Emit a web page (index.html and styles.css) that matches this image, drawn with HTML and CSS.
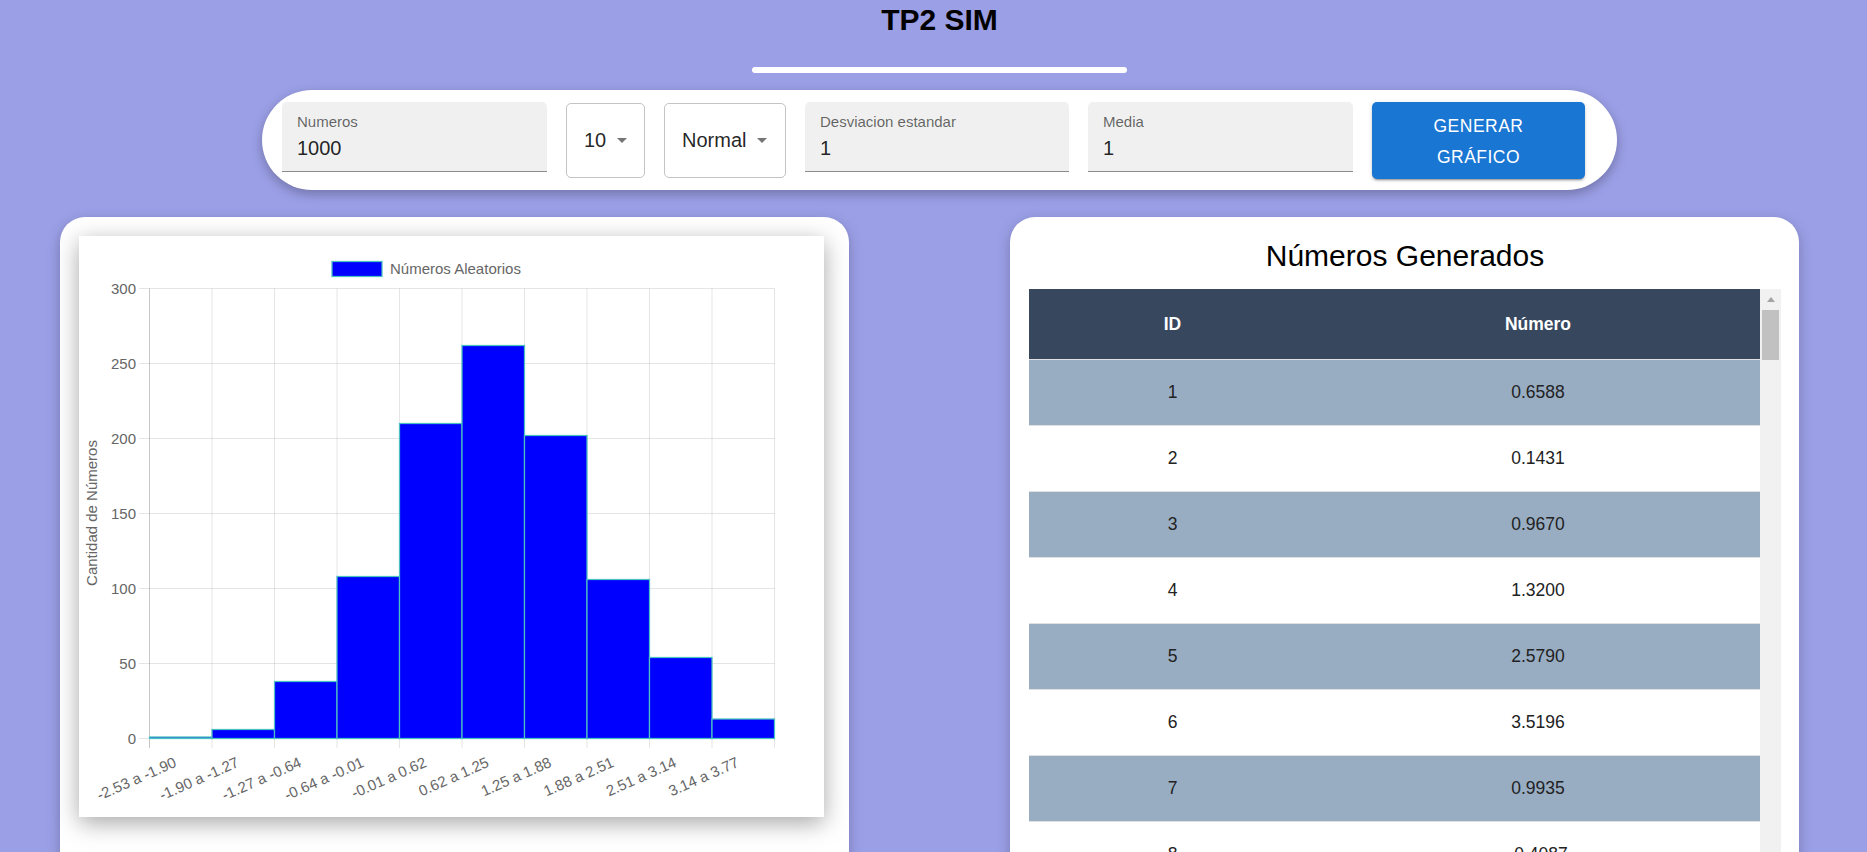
FILE: index.html
```html
<!DOCTYPE html>
<html lang="es">
<head>
<meta charset="utf-8">
<title>TP2 SIM</title>
<link rel="stylesheet" href="styles.css">
</head>
<body>
<header class="top">
  <h1 class="title">TP2 SIM</h1>
  <div class="divider"></div>
  <form class="controls">
    <div class="field field-numeros">
      <span class="field-label">Numeros</span>
      <span class="field-value">1000</span>
    </div>
    <div class="select select-intervals">
      <span class="select-value">10</span>
      <span class="caret"></span>
    </div>
    <div class="select select-dist">
      <span class="select-value">Normal</span>
      <span class="caret"></span>
    </div>
    <div class="field field-desv">
      <span class="field-label">Desviacion estandar</span>
      <span class="field-value">1</span>
    </div>
    <div class="field field-media">
      <span class="field-label">Media</span>
      <span class="field-value">1</span>
    </div>
    <button type="button" class="btn">Generar Gráfico</button>
  </form>
</header>

<main class="panels">
  <section class="card chart-card">
    <div class="chart-box">
      <svg class="chart" width="745" height="581" viewBox="0 0 745 581" xmlns="http://www.w3.org/2000/svg">
        <!-- legend -->
        <rect x="253" y="25.5" width="50" height="15" fill="#0000ff" stroke="rgb(75,192,192)" stroke-width="1.25"/>
        <text class="lbl" x="311" y="38">Números Aleatorios</text>

        <!-- horizontal grid -->
        <g stroke="rgba(0,0,0,0.1)" stroke-width="1">
          <line x1="60" y1="52.5" x2="695.5" y2="52.5"/>
          <line x1="60" y1="127.5" x2="695.5" y2="127.5"/>
          <line x1="60" y1="202.5" x2="695.5" y2="202.5"/>
          <line x1="60" y1="277.5" x2="695.5" y2="277.5"/>
          <line x1="60" y1="352.5" x2="695.5" y2="352.5"/>
          <line x1="60" y1="427.5" x2="695.5" y2="427.5"/>
          <line x1="60" y1="502.5" x2="695.5" y2="502.5"/>
        </g>
        <!-- vertical grid -->
        <g stroke="rgba(0,0,0,0.1)" stroke-width="1">
          <line x1="133" y1="52.5" x2="133" y2="512"/>
          <line x1="195.5" y1="52.5" x2="195.5" y2="512"/>
          <line x1="258" y1="52.5" x2="258" y2="512"/>
          <line x1="320.5" y1="52.5" x2="320.5" y2="512"/>
          <line x1="383" y1="52.5" x2="383" y2="512"/>
          <line x1="445.5" y1="52.5" x2="445.5" y2="512"/>
          <line x1="508" y1="52.5" x2="508" y2="512"/>
          <line x1="570.5" y1="52.5" x2="570.5" y2="512"/>
          <line x1="633" y1="52.5" x2="633" y2="512"/>
          <line x1="695.5" y1="52.5" x2="695.5" y2="512"/>
        </g>
        <line x1="70.5" y1="52.5" x2="70.5" y2="512" stroke="rgba(0,0,0,0.22)" stroke-width="1"/>

        <!-- bars -->
        <g fill="#0000ff" stroke="rgb(75,192,192)" stroke-width="1.25">
          <rect x="70.5" y="501" width="62.5" height="1.5"/>
          <rect x="133" y="493.5" width="62.5" height="9"/>
          <rect x="195.5" y="445.5" width="62.5" height="57"/>
          <rect x="258" y="340.5" width="62.5" height="162"/>
          <rect x="320.5" y="187.5" width="62.5" height="315"/>
          <rect x="383" y="109.5" width="62.5" height="393"/>
          <rect x="445.5" y="199.5" width="62.5" height="303"/>
          <rect x="508" y="343.5" width="62.5" height="159"/>
          <rect x="570.5" y="421.5" width="62.5" height="81"/>
          <rect x="633" y="483" width="62.5" height="19.5"/>
        </g>

        <!-- y ticks -->
        <g class="lbl" text-anchor="end">
          <text x="57" y="57.5">300</text>
          <text x="57" y="132.5">250</text>
          <text x="57" y="207.5">200</text>
          <text x="57" y="282.5">150</text>
          <text x="57" y="357.5">100</text>
          <text x="57" y="432.5">50</text>
          <text x="57" y="507.5">0</text>
        </g>
        <text class="lbl" x="18" y="277" text-anchor="middle" transform="rotate(-90 18 277)">Cantidad de Números</text>

        <!-- x labels -->
        <g class="lbl" text-anchor="end">
          <text x="98.5" y="530" transform="rotate(-24 98.5 530)">-2.53 a -1.90</text>
          <text x="161" y="530" transform="rotate(-24 161 530)">-1.90 a -1.27</text>
          <text x="223.5" y="530" transform="rotate(-24 223.5 530)">-1.27 a -0.64</text>
          <text x="286" y="530" transform="rotate(-24 286 530)">-0.64 a -0.01</text>
          <text x="348.5" y="530" transform="rotate(-24 348.5 530)">-0.01 a 0.62</text>
          <text x="411" y="530" transform="rotate(-24 411 530)">0.62 a 1.25</text>
          <text x="473.5" y="530" transform="rotate(-24 473.5 530)">1.25 a 1.88</text>
          <text x="536" y="530" transform="rotate(-24 536 530)">1.88 a 2.51</text>
          <text x="598.5" y="530" transform="rotate(-24 598.5 530)">2.51 a 3.14</text>
          <text x="661" y="530" transform="rotate(-24 661 530)">3.14 a 3.77</text>
        </g>
      </svg>
    </div>
  </section>

  <section class="card table-card">
    <h2 class="table-title">Números Generados</h2>
    <div class="table-wrap">
      <table class="num-table">
        <colgroup>
          <col class="col-id">
          <col class="col-num">
        </colgroup>
        <thead>
          <tr><th>ID</th><th>Número</th></tr>
        </thead>
        <tbody>
          <tr><td>1</td><td>0.6588</td></tr>
          <tr><td>2</td><td>0.1431</td></tr>
          <tr><td>3</td><td>0.9670</td></tr>
          <tr><td>4</td><td>1.3200</td></tr>
          <tr><td>5</td><td>2.5790</td></tr>
          <tr><td>6</td><td>3.5196</td></tr>
          <tr><td>7</td><td>0.9935</td></tr>
          <tr><td>8</td><td>-0.4087</td></tr>
          <tr><td>9</td><td>1.0412</td></tr>
          <tr><td>10</td><td>0.2875</td></tr>
        </tbody>
      </table>
      <div class="scrollbar">
        <div class="sb-arrow"><span class="sb-tri"></span></div>
        <div class="sb-thumb"></div>
      </div>
    </div>
  </section>
</main>
</body>
</html>
```

FILE: styles.css
```css
html, body {
  margin: 0;
  height: 100%;
  overflow: hidden;
}

body {
  background: #9b9fe6;
  font-family: "Liberation Sans", Arial, sans-serif;
  color: rgba(0, 0, 0, 0.87);
}

.top {
  display: flex;
  flex-direction: column;
  align-items: center;
  padding-left: 12px;
}

.title {
  margin: 0;
  padding-top: 2px;
  font-size: 30px;
  line-height: 36px;
  font-weight: 700;
  color: #000;
}

.divider {
  margin-top: 29px;
  width: 375px;
  height: 6px;
  border-radius: 3px;
  background: #fff;
}

.controls {
  margin: 17px 0 0;
  box-sizing: border-box;
  width: 1355px;
  height: 100px;
  padding: 12px 32px 12px 20px;
  background: #fff;
  border-radius: 50px;
  box-shadow: 0 4px 12px rgba(0, 0, 0, 0.28);
  display: flex;
  align-items: flex-start;
  gap: 19px;
}

.field {
  box-sizing: border-box;
  height: 70px;
  background: #f0f0f0;
  border-radius: 5px 5px 0 0;
  border-bottom: 1px solid rgba(0, 0, 0, 0.42);
  padding: 11px 15px 0;
}

.field-numeros { width: 265px; }
.field-desv { width: 264px; }
.field-media { width: 265px; }

.field-label {
  display: block;
  font-size: 15px;
  line-height: 18px;
  color: rgba(0, 0, 0, 0.6);
}

.field-value {
  display: block;
  margin-top: 5px;
  font-size: 20px;
  line-height: 24px;
  color: rgba(0, 0, 0, 0.87);
}

.select {
  box-sizing: border-box;
  height: 75px;
  margin-top: 1px;
  border: 1px solid rgba(0, 0, 0, 0.23);
  border-radius: 5px;
  display: flex;
  align-items: center;
  padding: 0 17px;
  gap: 11px;
  font-size: 20px;
  color: rgba(0, 0, 0, 0.87);
}

.select-intervals { width: 79px; }
.select-dist { width: 122px; }

.caret {
  width: 0;
  height: 0;
  border-left: 5px solid transparent;
  border-right: 5px solid transparent;
  border-top: 5px solid #757575;
}

.btn {
  box-sizing: border-box;
  width: 213px;
  height: 77px;
  border: none;
  border-radius: 5px;
  background: #1976d2;
  color: #fff;
  font-family: "Liberation Sans", Arial, sans-serif;
  font-size: 17.5px;
  line-height: 30.6px;
  letter-spacing: 0.5px;
  text-transform: uppercase;
  padding: 9px 20px 7px;
  box-shadow: 0 3px 1px -2px rgba(0, 0, 0, 0.2), 0 2px 2px 0 rgba(0, 0, 0, 0.14), 0 1px 5px 0 rgba(0, 0, 0, 0.12);
}

.panels {
  display: flex;
  gap: 161px;
  padding-left: 60px;
  margin-top: 27px;
}

.card {
  box-sizing: border-box;
  width: 789px;
  height: 720px;
  background: #fff;
  border-radius: 25px;
  box-shadow: 0 4px 14px rgba(0, 0, 0, 0.22);
  flex: none;
}

.chart-card {
  padding: 19px;
}

.chart-box {
  width: 745px;
  height: 581px;
  background: #fff;
  box-shadow: 0 6px 22px rgba(0, 0, 0, 0.35);
}

.chart {
  display: block;
}

.lbl {
  font-family: "Liberation Sans", Arial, sans-serif;
  font-size: 15px;
  fill: #666;
}

.table-card {
  padding: 21px 18px 0 19px;
}

.table-title {
  margin: 0 0 15px;
  font-size: 30px;
  line-height: 36px;
  font-weight: 400;
  text-align: center;
  color: #000;
}

.table-wrap {
  display: flex;
  align-items: flex-start;
  height: 600px;
  overflow: hidden;
}

.num-table {
  width: 731px;
  border-collapse: collapse;
  table-layout: fixed;
  font-size: 17.5px;
  flex: none;
}

.col-id { width: 287px; }
.col-num { width: 444px; }

.num-table th,
.num-table td {
  padding: 20px;
  text-align: center;
  border-bottom: 1px solid #e0e0e0;
}

.num-table th {
  line-height: 30px;
  font-weight: 700;
  color: #fff;
}

.num-table thead tr {
  background: #37475e;
}

.num-table td {
  line-height: 25px;
  color: #222;
}

.num-table tbody tr:nth-child(odd) {
  background: #98adc2;
}

.scrollbar {
  width: 21px;
  height: 600px;
  background: #f1f1f1;
  display: flex;
  flex-direction: column;
  flex: none;
}

.sb-arrow {
  height: 21px;
  display: flex;
  align-items: center;
  justify-content: center;
}

.sb-tri {
  width: 0;
  height: 0;
  border-left: 4px solid transparent;
  border-right: 4px solid transparent;
  border-bottom: 5px solid #a3a3a3;
}

.sb-thumb {
  margin: 0 2px;
  height: 50px;
  background: #c1c1c1;
}
```
